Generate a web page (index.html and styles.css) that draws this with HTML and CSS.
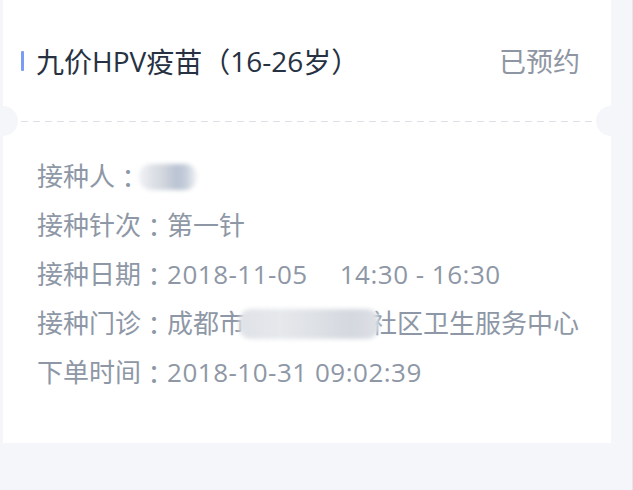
FILE: index.html
```html
<!DOCTYPE html>
<html lang="zh">
<head>
<meta charset="utf-8">
<link rel="stylesheet" href="styles.css">
</head>
<body>
<div class="page">
  <div class="card">
    <div class="head">
      <div class="title"><span class="bar"></span>九价<span>HPV</span>疫苗<span class="p">（</span><span>16-26</span>岁<span class="p">）</span></div>
      <div class="status">已预约</div>
    </div>
    <div class="divider"></div>
    <div class="rows">
      <div class="row">接种人<span class="p">：</span><span class="blur blur-name"></span></div>
      <div class="row">接种针次<span class="p">：</span>第一针</div>
      <div class="row">接种日期<span class="p">：</span><span class="num">2018-11-05</span><span class="gap"></span><span class="num">14:30 - 16:30</span></div>
      <div class="row">接种门诊<span class="p">：</span>成都市<span class="blur blur-clinic"></span>社区卫生服务中心</div>
      <div class="row">下单时间<span class="p">：</span><span class="num">2018-10-31 09:02:39</span></div>
    </div>
  </div>
  <div class="edge"></div>
</div>
</body>
</html>
```
FILE: styles.css
```css
html, body {
  margin: 0;
  padding: 0;
  background: #f5f6fa;
  font-family: "Open Sans", "Noto Sans CJK SC", sans-serif;
}
.page {
  width: 633px;
  height: 490px;
  display: flex;
  overflow: hidden;
  position: relative;
}
.card {
  position: relative;
  margin-left: 3px;
  width: 608px;
  height: 443px;
  background: #ffffff;
}
.edge {
  position: absolute;
  right: 0;
  top: 0;
  width: 1px;
  height: 490px;
  background: #e6e7ec;
}
.head {
  height: 121px;
  display: flex;
  align-items: center;
  justify-content: space-between;
  padding: 0 31px 0 18px;
  box-sizing: border-box;
}
.title {
  display: flex;
  align-items: center;
  font-size: 28px;
  color: #263142;
  white-space: pre;
}
.bar {
  width: 3px;
  height: 20px;
  background: #7b9cf5;
  margin-right: 12px;
  border-radius: 1px;
}
.status {
  font-size: 27px;
  color: #8f96a3;
}
.num {
  letter-spacing: 0.5px;
}
.p {
  font-family: "Noto Sans CJK TC", sans-serif;
}
.divider {
  margin: 0 18px;
  height: 1px;
  background: repeating-linear-gradient(90deg, #dde0e6 0 7px, transparent 7px 12px);
}
.card::before, .card::after {
  content: "";
  position: absolute;
  top: 106px;
  width: 30px;
  height: 30px;
  border-radius: 50%;
  background: #f5f6fa;
}
.card::before { left: -15px; }
.card::after { right: -15px; }
.rows {
  padding: 30px 0 0 34px;
}
.row {
  height: 49px;
  line-height: 49px;
  font-size: 26px;
  color: #8e97a6;
  white-space: pre;
  display: flex;
  align-items: center;
}
.gap { display: inline-block; width: 32px; }
.blur {
  display: inline-block;
  border-radius: 12px;
  filter: blur(2px);
}
.blur-name {
  width: 58px;
  height: 26px;
  margin-left: -2px;
  background: linear-gradient(90deg, #f0f1f4 0%, #dde1e7 25%, #cfd4dc 45%, #b9c3d3 65%, #c2cbd8 78%, #f2f3f5 100%);
}
.blur-clinic {
  position: relative;
  z-index: 1;
  width: 140px;
  height: 30px;
  margin-left: -6px;
  margin-right: -8px;
  background: linear-gradient(90deg, #dfe2e7 0%, #e6e8ec 30%, #dcdfe4 60%, #d4d8df 80%, #dde0e5 100%);
}
```
